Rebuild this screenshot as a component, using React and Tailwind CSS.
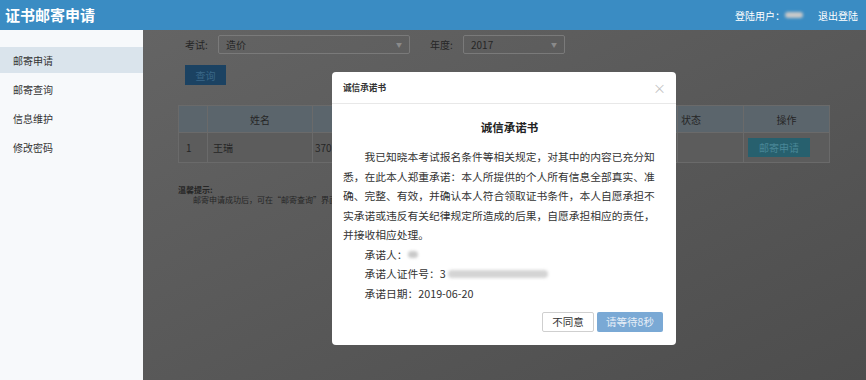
import React from 'react';

const font = { fontFamily: '"Noto Sans CJK SC", "Noto Sans", sans-serif' };

const Select = ({ value, className }) => (
  <div className={`flex h-[19px] items-center justify-between rounded-[2px] border border-[#7a7a7a] px-[7px] text-[10px] text-[#262626] ${className}`}>
    <span>{value}</span>
    <span className="text-[6px] text-[#8a8a8a]">▼</span>
  </div>
);

const Blur = ({ className }) => (
  <span className={`inline-block rounded-sm bg-[#c9c9c9] blur-[1.5px] ${className}`} />
);

const App = () => {
  const menu = ['邮寄申请', '邮寄查询', '信息维护', '修改密码'];

  return (
    <div className="flex h-[380px] w-[866px] flex-col overflow-hidden bg-white" style={font}>
      <header className="flex h-[30px] shrink-0 items-center justify-between bg-[#3a8cc3] pl-[5px] pr-[8px] text-white">
        <h1 className="text-[15px] font-bold">证书邮寄申请</h1>
        <div className="flex items-center text-[10px]">
          <span>登陆用户：</span>
          <Blur className="h-[6px] w-[18px] bg-[#b9d7ee]" />
          <span className="ml-[15px]">退出登陆</span>
        </div>
      </header>

      <div className="flex flex-1">
        <aside className="w-[143px] shrink-0 bg-[#f7f9fb] pt-[17px]">
          <ul className="flex flex-col gap-[3px]">
            {menu.map((m, i) => (
              <li
                key={m}
                className={`flex h-[26px] items-center pl-[13px] text-[10px] text-[#333] ${i === 0 ? 'bg-[#dae4ec]' : ''}`}
              >
                {m}
              </li>
            ))}
          </ul>
        </aside>

        <main className="relative flex-1 bg-linear-to-br from-[#646464] to-[#4d4d4d]">
          <div className="pl-[42px] pt-[5px]">
            <div className="flex items-center">
              <span className="w-[33px] text-[10px] text-[#262626]">考试:</span>
              <Select value="造价" className="w-[192px]" />
              <span className="ml-[20px] w-[33px] text-[10px] text-[#262626]">年度:</span>
              <Select value="2017" className="w-[102px]" />
            </div>
            <button className="mt-[11px] flex h-[20px] w-[41px] items-center justify-center bg-[#1b4262] text-[10px] text-[#3a6888]">
              查询
            </button>
          </div>

          <table className="ml-[35px] mt-[20px] w-[652px] border-collapse text-[10px] text-[#262626]">
            <thead>
              <tr className="h-[27px] bg-[#5b656c]">
                <th className="w-[29px] border border-[#6a6a6a]"></th>
                <th className="w-[105px] border border-[#6a6a6a] font-normal">姓名</th>
                <th className="w-[365px] border border-[#6a6a6a]"></th>
                <th className="w-[66px] border border-[#6a6a6a] pl-[3px] text-left font-normal">状态</th>
                <th className="border border-[#6a6a6a] font-normal">操作</th>
              </tr>
            </thead>
            <tbody>
              <tr className="h-[30px] bg-[#5c5c5c]">
                <td className="border border-[#6a6a6a] pl-[7px]">1</td>
                <td className="border border-[#6a6a6a] pl-[5px]">王瑞</td>
                <td className="border border-[#6a6a6a] pl-[2px]">370</td>
                <td className="border border-[#6a6a6a]"></td>
                <td className="border border-[#6a6a6a] pl-[4px]">
                  <span className="flex h-[19px] w-[62px] items-center justify-center bg-[#27606e] text-[10px] text-[#4a8797]">
                    邮寄申请
                  </span>
                </td>
              </tr>
            </tbody>
          </table>

          <div className="ml-[35px] mt-[22px] text-[8px] leading-[10px] text-[#262626]">
            <p className="font-bold">温馨提示:</p>
            <p className="pl-[15px]">邮寄申请成功后，可在“邮寄查询”界面查看邮寄状态。</p>
          </div>

          <div className="absolute left-[189px] top-[42px] flex h-[273px] w-[344px] flex-col rounded-[4px] bg-white text-[#333]">
            <div className="flex h-[32px] shrink-0 items-center justify-between border-b border-[#e8e8e8] pl-[11px] pr-[10px]">
              <span className="text-[8.6px] font-bold">诚信承诺书</span>
              <span className="text-[13px] leading-none text-[#c4c4c4]">×</span>
            </div>
            <div className="pl-[11px] pt-[15px]">
              <h2 className="text-center text-[11.5px] font-bold leading-[16px] text-[#222]">诚信承诺书</h2>
              <div className="mt-[12px] w-[312px] text-[10.75px] leading-[19.5px]">
                <p className="indent-[2em]">
                  我已知晓本考试报名条件等相关规定，对其中的内容已充分知悉，在此本人郑重承诺：本人所提供的个人所有信息全部真实、准确、完整、有效，并确认本人符合领取证书条件，本人自愿承担不实承诺或违反有关纪律规定所造成的后果，自愿承担相应的责任，并接收相应处理。
                </p>
                <p className="flex items-center pl-[2em]">
                  承诺人：<Blur className="h-[7px] w-[10px] bg-[#aaa]" />
                </p>
                <p className="flex items-center pl-[2em]">
                  承诺人证件号：3<Blur className="ml-[2px] h-[8px] w-[100px] bg-[#d4d4d4]" />
                </p>
                <p className="pl-[2em]">承诺日期：2019-06-20</p>
              </div>
            </div>
            <div className="mt-[9px] flex justify-end gap-[3px] pr-[13px]">
              <button className="flex h-[20px] w-[52px] items-center justify-center rounded-[2px] border border-[#cfcfcf] bg-white text-[10.5px] text-[#333]">
                不同意
              </button>
              <button className="flex h-[20px] w-[66px] items-center justify-center rounded-[2px] bg-[#7aa9d5] text-[10.5px] text-[#e6eef7]">
                请等待8秒
              </button>
            </div>
          </div>
        </main>
      </div>
    </div>
  );
};

export default App;
